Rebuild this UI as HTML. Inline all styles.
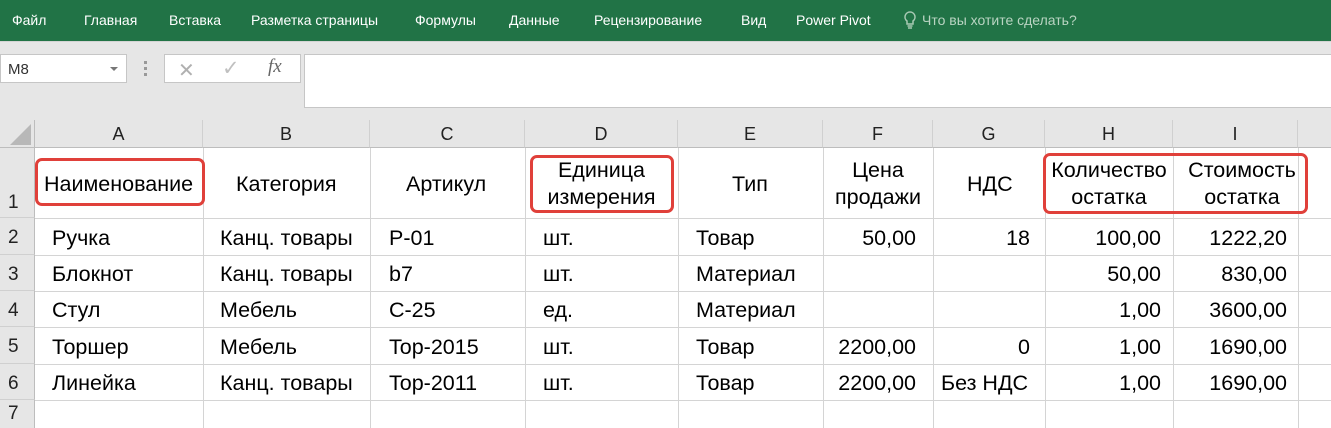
<!DOCTYPE html>
<html><head><meta charset="utf-8"><style>
*{margin:0;padding:0;box-sizing:border-box}
body{width:1331px;height:428px;overflow:hidden;background:#fff;font-family:"Liberation Sans",sans-serif;position:relative}
.a{position:absolute}
.rib{left:0;top:0;width:1331px;height:41px;background:#217346;color:#fff;font-size:14px}
.rib span{position:absolute;top:12px}
.tb{left:0;top:41px;width:1331px;height:79px;background:#e6e6e6;border-top:1px solid #d4d4d4}
.hdr{top:120px;height:28px;background:#e6e6e6;border-bottom:1px solid #bdbdbd;border-right:1px solid #d0d0d0;text-align:center;font-size:18px;line-height:29px;color:#222}
.rh{left:0;width:35px;background:#e6e6e6;border-right:1px solid #bdbdbd;border-bottom:1px solid #d0d0d0;font-size:19px;padding-left:8px;color:#222}
.vl{top:148px;width:1px;height:280px;background:#d4d4d4}
.hl{left:35px;width:1296px;height:1px;background:#d4d4d4}
.c{font-size:21.5px;color:#000;white-space:nowrap}
.box{border:3.5px solid #e0403a;border-radius:7px}
</style></head><body>
<div class="a rib">
<span style="left:12px">Файл</span><span style="left:84px">Главная</span><span style="left:169px">Вставка</span><span style="left:251px">Разметка страницы</span><span style="left:415px">Формулы</span><span style="left:509px">Данные</span><span style="left:594px">Рецензирование</span><span style="left:741px">Вид</span><span style="left:796px">Power Pivot</span>
<span style="left:902px;top:10px"><svg width="16" height="20" viewBox="0 0 16 20"><path d="M8 2a5 5 0 0 0-3 9v3h6v-3a5 5 0 0 0-3-9z" fill="none" stroke="#a9c9b4" stroke-width="1.5"/><path d="M5.5 16h5M6 18h4" stroke="#a9c9b4" stroke-width="1.5"/></svg></span>
<span style="left:922px;color:#b9d4c2">Что вы хотите сделать?</span>
</div>
<div class="a tb"></div>
<div class="a" style="left:0;top:54px;width:127px;height:29px;background:#fff;border:1px solid #c6c6c6;font-size:15px;padding:6px 7px;color:#333">M8</div>
<div class="a" style="left:110px;top:67px;width:0;height:0;border-left:4px solid transparent;border-right:4px solid transparent;border-top:4px solid #777"></div>
<div class="a" style="left:144px;top:61px;width:3px;height:3px;background:#999;box-shadow:0 6px 0 #999,0 12px 0 #999"></div>
<div class="a" style="left:164px;top:54px;width:137px;height:29px;background:#fff;border:1px solid #c6c6c6"></div>
<div class="a" style="left:178px;top:58px;font-size:20px;color:#b0b0b0">✕</div>
<div class="a" style="left:222px;top:56px;font-size:21px;color:#c0c0c0">✓</div>
<div class="a" style="left:268px;top:56px;font-size:19px;color:#666;font-family:'Liberation Serif',serif;font-style:italic">fx</div>
<div class="a" style="left:304px;top:54px;width:1027px;height:54px;background:#fff;border:1px solid #c6c6c6;border-right:none"></div>
<div class="a" style="left:0;top:120px;width:35px;height:28px;background:#e6e6e6;border-right:1px solid #bdbdbd;border-bottom:1px solid #bdbdbd"></div>
<div class="a" style="left:10px;top:124px;width:0;height:0;border-left:21px solid transparent;border-bottom:21px solid #b8b8b8"></div>
<div class="a hdr" style="left:35px;width:168px">A</div>
<div class="a hdr" style="left:203px;width:167px">B</div>
<div class="a hdr" style="left:370px;width:155px">C</div>
<div class="a hdr" style="left:525px;width:153px">D</div>
<div class="a hdr" style="left:678px;width:145px">E</div>
<div class="a hdr" style="left:823px;width:110px">F</div>
<div class="a hdr" style="left:933px;width:112px">G</div>
<div class="a hdr" style="left:1045px;width:128px">H</div>
<div class="a hdr" style="left:1173px;width:125px">I</div>
<div class="a hdr" style="left:1298px;width:33px;border-right:none"></div>
<div class="a rh" style="top:148px;height:70px;padding-top:44px">1</div>
<div class="a rh" style="top:218px;height:37px;padding-top:9px">2</div>
<div class="a rh" style="top:255px;height:36px;padding-top:9px">3</div>
<div class="a rh" style="top:291px;height:36px;padding-top:9px">4</div>
<div class="a rh" style="top:327px;height:37px;padding-top:9px">5</div>
<div class="a rh" style="top:364px;height:36px;padding-top:9px">6</div>
<div class="a rh" style="top:400px;height:28px;padding-top:3px;border-bottom:none">7</div>
<div class="a vl" style="left:203px"></div><div class="a vl" style="left:370px"></div><div class="a vl" style="left:525px"></div><div class="a vl" style="left:678px"></div><div class="a vl" style="left:823px"></div><div class="a vl" style="left:933px"></div><div class="a vl" style="left:1045px"></div><div class="a vl" style="left:1173px"></div><div class="a vl" style="left:1298px"></div>
<div class="a hl" style="top:218px"></div><div class="a hl" style="top:255px"></div><div class="a hl" style="top:291px"></div><div class="a hl" style="top:327px"></div><div class="a hl" style="top:364px"></div><div class="a hl" style="top:400px"></div>
<div class="a c" style="left:44px;top:172px">Наименование</div>
<div class="a c" style="left:236px;top:172px">Категория</div>
<div class="a c" style="left:406px;top:172px">Артикул</div>
<div class="a c" style="left:525px;width:153px;text-align:center;top:157px;line-height:27px">Единица<br>измерения</div>
<div class="a c" style="left:732px;top:172px">Тип</div>
<div class="a c" style="left:823px;width:110px;text-align:center;top:157px;line-height:27px">Цена<br>продажи</div>
<div class="a c" style="left:967px;top:172px">НДС</div>
<div class="a c" style="left:1045px;width:128px;text-align:center;top:157px;line-height:27px">Количество<br>остатка</div>
<div class="a c" style="left:1173px;width:138px;text-align:center;top:157px;line-height:27px">Стоимость<br>остатка</div>
<div class="a box" style="left:35px;top:158px;width:170px;height:48px"></div>
<div class="a box" style="left:530px;top:155px;width:144px;height:58px"></div>
<div class="a box" style="left:1043px;top:153px;width:265px;height:61px"></div>
<div class="a" style="top:226px;left:0;width:1331px">
<div class="a c" style="left:52px">Ручка</div><div class="a c" style="left:220px">Канц. товары</div><div class="a c" style="left:389px">Р-01</div><div class="a c" style="left:543px">шт.</div><div class="a c" style="left:696px">Товар</div><div class="a c" style="right:415px">50,00</div><div class="a c" style="right:301px">18</div><div class="a c" style="right:170px">100,00</div><div class="a c" style="right:44px">1222,20</div>
</div>
<div class="a" style="top:262px;left:0;width:1331px">
<div class="a c" style="left:52px">Блокнот</div><div class="a c" style="left:220px">Канц. товары</div><div class="a c" style="left:389px">b7</div><div class="a c" style="left:543px">шт.</div><div class="a c" style="left:696px">Материал</div><div class="a c" style="right:170px">50,00</div><div class="a c" style="right:44px">830,00</div>
</div>
<div class="a" style="top:298px;left:0;width:1331px">
<div class="a c" style="left:52px">Стул</div><div class="a c" style="left:220px">Мебель</div><div class="a c" style="left:389px">С-25</div><div class="a c" style="left:543px">ед.</div><div class="a c" style="left:696px">Материал</div><div class="a c" style="right:170px">1,00</div><div class="a c" style="right:44px">3600,00</div>
</div>
<div class="a" style="top:335px;left:0;width:1331px">
<div class="a c" style="left:52px">Торшер</div><div class="a c" style="left:220px">Мебель</div><div class="a c" style="left:389px">Top-2015</div><div class="a c" style="left:543px">шт.</div><div class="a c" style="left:696px">Товар</div><div class="a c" style="right:415px">2200,00</div><div class="a c" style="right:301px">0</div><div class="a c" style="right:170px">1,00</div><div class="a c" style="right:44px">1690,00</div>
</div>
<div class="a" style="top:371px;left:0;width:1331px">
<div class="a c" style="left:52px">Линейка</div><div class="a c" style="left:220px">Канц. товары</div><div class="a c" style="left:389px">Top-2011</div><div class="a c" style="left:543px">шт.</div><div class="a c" style="left:696px">Товар</div><div class="a c" style="right:415px">2200,00</div><div class="a c" style="left:941px">Без НДС</div><div class="a c" style="right:170px">1,00</div><div class="a c" style="right:44px">1690,00</div>
</div>
</body></html>
